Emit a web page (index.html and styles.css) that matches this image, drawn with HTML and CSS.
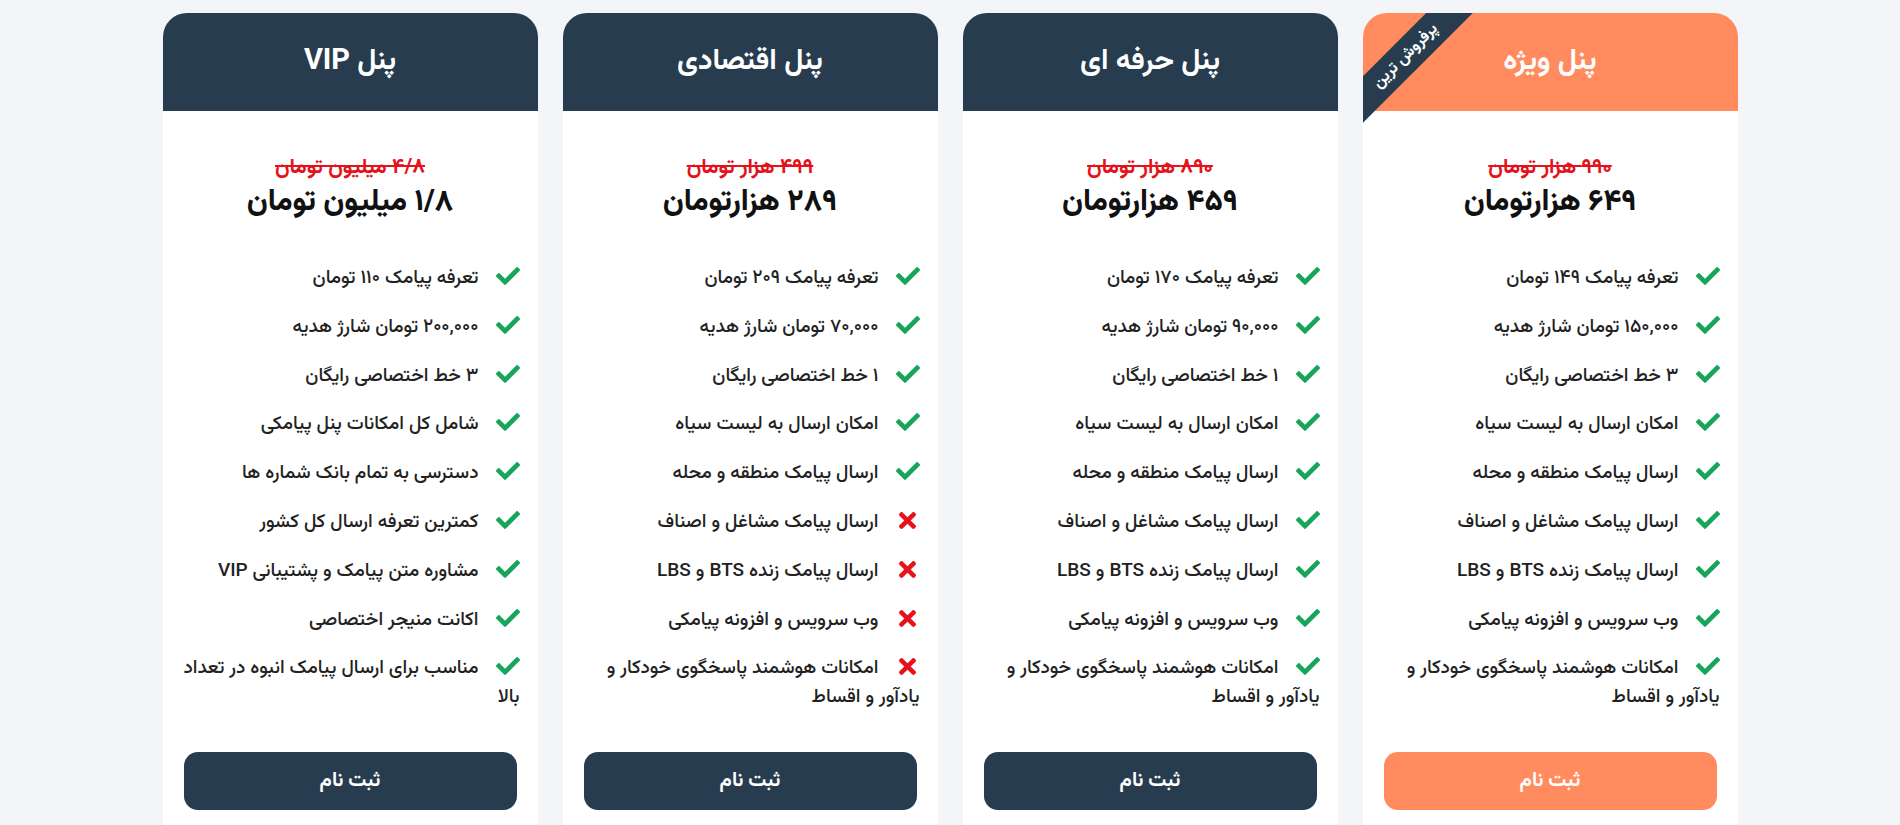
FILE: index.html
```html
<!DOCTYPE html>
<html lang="fa" dir="rtl">
<head>
<meta charset="utf-8">
<title>تعرفه پنل پیامک</title>
<link rel="stylesheet" href="styles.css">
</head>
<body>
<svg width="0" height="0" class="defs">
  <defs>
    <symbol id="ok" viewBox="0 64 512 384"><path d="M173.898 439.404l-166.4-166.4c-9.997-9.997-9.997-26.206 0-36.204l36.203-36.204c9.997-9.998 26.207-9.998 36.204 0L192 312.69 432.095 72.596c9.997-9.997 26.207-9.997 36.204 0l36.203 36.204c9.997 9.997 9.997 26.206 0 36.204l-294.4 294.401c-9.998 9.997-26.207 9.997-36.204-.001z"/></symbol>
    <symbol id="no" viewBox="0 80 352 352"><path d="M242.72 256l100.07-100.07c12.28-12.28 12.28-32.190 0-44.48l-22.24-22.24c-12.28-12.28-32.19-12.28-44.48 0L176 189.28 75.930 89.21c-12.28-12.28-32.19-12.28-44.48 0L9.21 111.45c-12.28 12.28-12.28 32.19 0 44.48L109.28 256 9.21 356.07c-12.28 12.28-12.28 32.19 0 44.48l22.24 22.24c12.28 12.28 32.2 12.28 44.48 0L176 322.72l100.07 100.07c12.28 12.28 32.2 12.28 44.48 0l22.24-22.24c12.28-12.28 12.28-32.19 0-44.48L242.72 256z"/></symbol>
  </defs>
</svg>
<main class="plans">
  <section class="card card-featured">
    <div class="ribbon">پرفروش ترین</div>
    <header class="card-head">پنل ویژه</header>
    <div class="price">
      <div class="price-old">۹۹۰ هزار تومان</div>
      <div class="price-new">۶۴۹ هزارتومان</div>
    </div>
    <ul class="features">
      <li><span class="ic ok"><svg><use href="#ok"/></svg></span>تعرفه پیامک ۱۴۹ تومان</li>
      <li><span class="ic ok"><svg><use href="#ok"/></svg></span>۱۵۰,۰۰۰ تومان شارژ هدیه</li>
      <li><span class="ic ok"><svg><use href="#ok"/></svg></span>۳ خط اختصاصی رایگان</li>
      <li><span class="ic ok"><svg><use href="#ok"/></svg></span>امکان ارسال به لیست سیاه</li>
      <li><span class="ic ok"><svg><use href="#ok"/></svg></span>ارسال پیامک منطقه و محله</li>
      <li><span class="ic ok"><svg><use href="#ok"/></svg></span>ارسال پیامک مشاغل و اصناف</li>
      <li><span class="ic ok"><svg><use href="#ok"/></svg></span>ارسال پیامک زنده BTS و LBS</li>
      <li><span class="ic ok"><svg><use href="#ok"/></svg></span>وب سرویس و افزونه پیامکی</li>
      <li><span class="ic ok"><svg><use href="#ok"/></svg></span>امکانات هوشمند پاسخگوی خودکار و یادآور و اقساط</li>
    </ul>
    <a class="btn" href="#">ثبت نام</a>
  </section>

  <section class="card">
    <header class="card-head">پنل حرفه ای</header>
    <div class="price">
      <div class="price-old">۸۹۰ هزار تومان</div>
      <div class="price-new">۴۵۹ هزارتومان</div>
    </div>
    <ul class="features">
      <li><span class="ic ok"><svg><use href="#ok"/></svg></span>تعرفه پیامک ۱۷۰ تومان</li>
      <li><span class="ic ok"><svg><use href="#ok"/></svg></span>۹۰,۰۰۰ تومان شارژ هدیه</li>
      <li><span class="ic ok"><svg><use href="#ok"/></svg></span>۱ خط اختصاصی رایگان</li>
      <li><span class="ic ok"><svg><use href="#ok"/></svg></span>امکان ارسال به لیست سیاه</li>
      <li><span class="ic ok"><svg><use href="#ok"/></svg></span>ارسال پیامک منطقه و محله</li>
      <li><span class="ic ok"><svg><use href="#ok"/></svg></span>ارسال پیامک مشاغل و اصناف</li>
      <li><span class="ic ok"><svg><use href="#ok"/></svg></span>ارسال پیامک زنده BTS و LBS</li>
      <li><span class="ic ok"><svg><use href="#ok"/></svg></span>وب سرویس و افزونه پیامکی</li>
      <li><span class="ic ok"><svg><use href="#ok"/></svg></span>امکانات هوشمند پاسخگوی خودکار و یادآور و اقساط</li>
    </ul>
    <a class="btn" href="#">ثبت نام</a>
  </section>

  <section class="card">
    <header class="card-head">پنل اقتصادی</header>
    <div class="price">
      <div class="price-old">۴۹۹ هزار تومان</div>
      <div class="price-new">۲۸۹ هزارتومان</div>
    </div>
    <ul class="features">
      <li><span class="ic ok"><svg><use href="#ok"/></svg></span>تعرفه پیامک ۲۰۹ تومان</li>
      <li><span class="ic ok"><svg><use href="#ok"/></svg></span>۷۰,۰۰۰ تومان شارژ هدیه</li>
      <li><span class="ic ok"><svg><use href="#ok"/></svg></span>۱ خط اختصاصی رایگان</li>
      <li><span class="ic ok"><svg><use href="#ok"/></svg></span>امکان ارسال به لیست سیاه</li>
      <li><span class="ic ok"><svg><use href="#ok"/></svg></span>ارسال پیامک منطقه و محله</li>
      <li><span class="ic no"><svg><use href="#no"/></svg></span>ارسال پیامک مشاغل و اصناف</li>
      <li><span class="ic no"><svg><use href="#no"/></svg></span>ارسال پیامک زنده BTS و LBS</li>
      <li><span class="ic no"><svg><use href="#no"/></svg></span>وب سرویس و افزونه پیامکی</li>
      <li><span class="ic no"><svg><use href="#no"/></svg></span>امکانات هوشمند پاسخگوی خودکار و یادآور و اقساط</li>
    </ul>
    <a class="btn" href="#">ثبت نام</a>
  </section>

  <section class="card">
    <header class="card-head">پنل VIP</header>
    <div class="price">
      <div class="price-old">۴/۸ میلیون تومان</div>
      <div class="price-new">۱/۸ میلیون تومان</div>
    </div>
    <ul class="features">
      <li><span class="ic ok"><svg><use href="#ok"/></svg></span>تعرفه پیامک ۱۱۰ تومان</li>
      <li><span class="ic ok"><svg><use href="#ok"/></svg></span>۲۰۰,۰۰۰ تومان شارژ هدیه</li>
      <li><span class="ic ok"><svg><use href="#ok"/></svg></span>۳ خط اختصاصی رایگان</li>
      <li><span class="ic ok"><svg><use href="#ok"/></svg></span>شامل کل امکانات پنل پیامکی</li>
      <li><span class="ic ok"><svg><use href="#ok"/></svg></span>دسترسی به تمام بانک شماره ها</li>
      <li><span class="ic ok"><svg><use href="#ok"/></svg></span>کمترین تعرفه ارسال کل کشور</li>
      <li><span class="ic ok"><svg><use href="#ok"/></svg></span>مشاوره متن پیامک و پشتیبانی VIP</li>
      <li><span class="ic ok"><svg><use href="#ok"/></svg></span>اکانت منیجر اختصاصی</li>
      <li><span class="ic ok"><svg><use href="#ok"/></svg></span>مناسب برای ارسال پیامک انبوه در تعداد بالا</li>
    </ul>
    <a class="btn" href="#">ثبت نام</a>
  </section>
</main>
</body>
</html>
```

FILE: styles.css
```css
html, body {
  margin: 0;
  padding: 0;
  overflow: hidden;
}
body {
  background: #f3f5f9;
  font-family: "Vazirmatn", "DejaVu Sans", sans-serif;
  color: #222;
}
.defs {
  position: absolute;
  width: 0;
  height: 0;
}
.plans {
  width: 1575px;
  margin: 0 auto;
  padding-top: 13px;
  display: grid;
  grid-template-columns: repeat(4, 375px);
  gap: 25px;
  align-items: start;
}
.card {
  position: relative;
  overflow: hidden;
  background: #fff;
  border-radius: 24px 24px 0 0;
  padding-bottom: 40px;
}
.card-head {
  height: 98px;
  display: flex;
  align-items: center;
  justify-content: center;
  background: #273d4f;
  color: #fff;
  font-size: 29px;
  font-weight: bold;
}
.card-featured .card-head {
  background: #ff8b5f;
}
.ribbon {
  position: absolute;
  top: 27px;
  left: -57px;
  width: 200px;
  height: 33px;
  line-height: 33px;
  background: #273d4f;
  color: #fff;
  font-size: 16px;
  font-weight: bold;
  text-align: center;
  transform: rotate(-45deg);
}
.price {
  text-align: center;
  padding-top: 43px;
}
.price-old {
  color: #e3121b;
  font-size: 21px;
  font-weight: bold;
  line-height: 28px;
  text-decoration: line-through;
  text-decoration-thickness: 2px;
}
.price-new {
  color: #111;
  font-size: 30px;
  font-weight: 800;
  line-height: 42px;
}
.features {
  list-style: none;
  margin: 0;
  padding: 40px 18px 0 12px;
  font-size: 19px;
  font-weight: 500;
  line-height: 29px;
}
.features li {
  margin-bottom: 19.8px;
}
.ic {
  display: inline-flex;
  justify-content: center;
  align-items: center;
  width: 24px;
  height: 18px;
  margin-left: 17px;
  vertical-align: -2px;
}
.ic svg {
  display: block;
}
.ic.ok svg {
  width: 24px;
  height: 18px;
  fill: #17a558;
}
.ic.no svg {
  width: 17px;
  height: 17px;
  fill: #e8121b;
}
.btn {
  display: flex;
  align-items: center;
  justify-content: center;
  height: 58px;
  margin: 40px 21px 0;
  border-radius: 14px;
  background: #273d4f;
  color: #fff;
  font-size: 20px;
  font-weight: bold;
  text-decoration: none;
}
.card-featured .btn {
  background: #ff8b5f;
}
```
